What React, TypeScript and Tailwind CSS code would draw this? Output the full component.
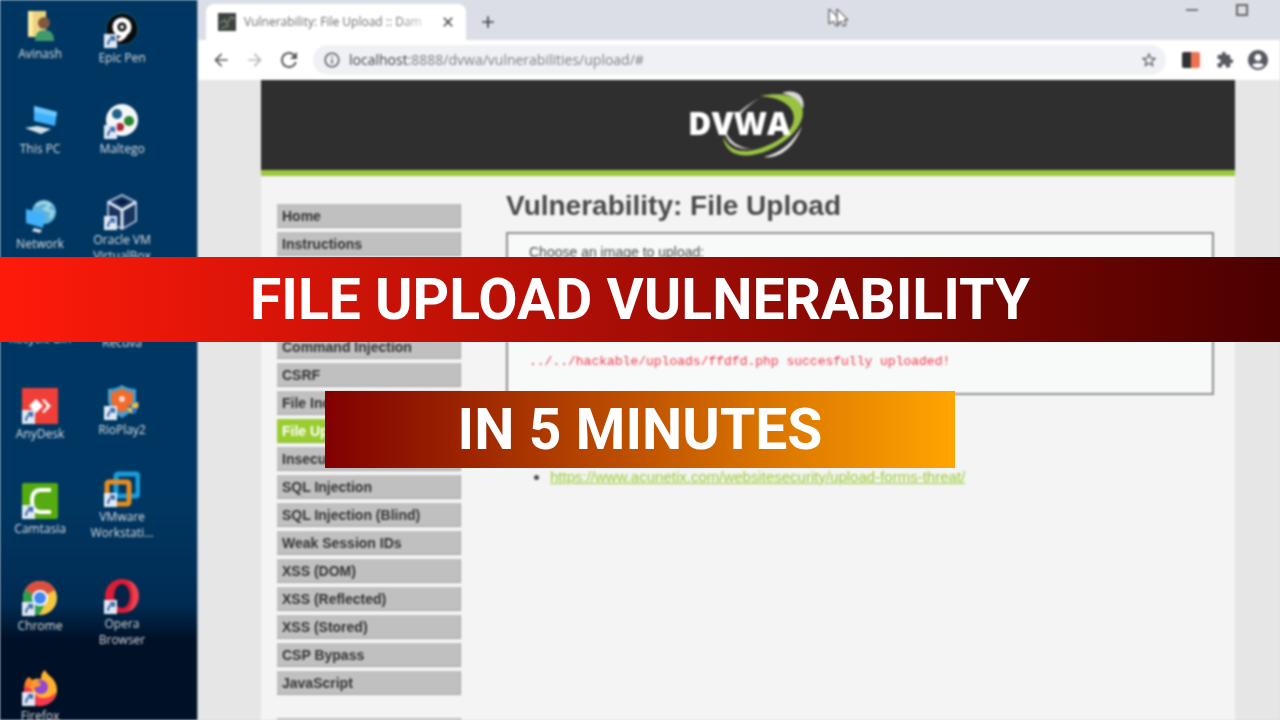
import type { ReactNode } from 'react'
import { MdAccountCircle, MdAdd, MdArrowBack, MdArrowForward, MdClose, MdExtension, MdInfoOutline, MdRefresh, MdStarBorder } from 'react-icons/md'

type DesktopItem = {
  label: string
  height: string
  icon: ReactNode
}

function Shortcut() {
  return (
    <>
      <rect x="0" y="22" width="13" height="14" fill="#dfe8f3" />
      <path d="M4 33c0-4 2-6 5-6M6 25h4v4" stroke="#3a68ac" strokeWidth="2" fill="none" />
    </>
  )
}

const leftIcons: DesktopItem[] = [
  {
    label: 'Avinash',
    height: 'h-[95px]',
    icon: (
      <>
        <path d="M6 3h18v26H6z" fill="#ecd27c" />
        <path d="M6 3h5v26l-5-2z" fill="#fbe9a4" />
        <circle cx="22" cy="15" r="6" fill="#80583c" />
        <path d="M13 33c0-8 4-11 10-11s9 4 9 11z" fill="#3f9a6c" />
      </>
    ),
  },
  {
    label: 'This PC',
    height: 'h-[95px]',
    icon: (
      <>
        <path d="M12 3l23 6-2 14-21-5z" fill="#3fb0fa" />
        <path d="M12 3l23 6-1 5-22-5z" fill="#6cc6ff" />
        <path d="M3 25l12-2 14 3-10 5z" fill="#d5dfe8" />
      </>
    ),
  },
  {
    label: 'Network',
    height: 'h-[95px]',
    icon: (
      <>
        <circle cx="22" cy="14" r="12" fill="#5cb4dc" />
        <path d="M14 8c4-5 12-4 14-1l-5 4 8 3-3 6" fill="none" stroke="#a4d3df" strokeWidth="3" />
        <path d="M4 11l19 5-2 14-17-5z" fill="#42b0fa" />
        <path d="M12 30l8 2-2 3-8-2z" fill="#d5dfe8" />
      </>
    ),
  },
  {
    label: 'Recycle Bin',
    height: 'h-[95px]',
    icon: <path d="M7 5h22l-4 28H11z" fill="#d9e5ee" />,
  },
  {
    label: 'AnyDesk',
    height: 'h-[95px]',
    icon: (
      <>
        <rect width="36" height="36" fill="#ef3f38" />
        <path d="M7 18l7-7 7 7-7 7z" fill="#fff" />
        <path d="M20 12l2-1 7 7-7 7-2-1 5-6z" fill="#fff" />
        <Shortcut />
      </>
    ),
  },
  {
    label: 'Camtasia',
    height: 'h-[97px]',
    icon: (
      <>
        <rect width="36" height="36" rx="2" fill="#55ab10" />
        <path d="M29 7H19q-9 0-9 11t9 11h10" fill="none" stroke="#fff" strokeWidth="4" />
        <Shortcut />
      </>
    ),
  },
  {
    label: 'Chrome',
    height: 'h-[90px]',
    icon: (
      <>
        <circle cx="18" cy="18" r="17" fill="#f4c842" />
        <path d="M18 18L3 10a17 17 0 0 1 30 0z" fill="#d9503f" />
        <path d="M18 18L3 10a17 17 0 0 0 14 25l5-9z" fill="#2f9d4e" />
        <circle cx="18" cy="18" r="8" fill="#fff" />
        <circle cx="18" cy="18" r="6" fill="#4285f4" />
        <Shortcut />
      </>
    ),
  },
  {
    label: 'Firefox',
    height: 'h-[90px]',
    icon: (
      <>
        <path d="M2 20c0-6 2-11 5-13l3 3c4-2 8-1 9-1 0-4 1-7 4-9 2 6 12 8 12 20a16 15 0 0 1-33 0z" fill="#ffb22e" />
        <path d="M2 20a16 15 0 0 0 32 2c-5 6-10 6-14 6S5 20 10 10c-5 2-8 4-8 10z" fill="#f7374f" />
        <path d="M3 15c1-8 4-8 6-5 5 0 7 3 7 5l-7 5z" fill="#ff8424" />
        <circle cx="19" cy="17" r="7" fill="#9048d5" />
        <path d="M9 12c5-2 10 0 10 3-3 3-7 1-9 5z" fill="#ff9a26" />
        <Shortcut />
      </>
    ),
  },
]

const rightIcons: DesktopItem[] = [
  {
    label: 'Epic Pen',
    height: 'h-[91px]',
    icon: (
      <>
        <circle cx="18" cy="17" r="16" fill="#090b0d" stroke="#146178" />
        <circle cx="18" cy="15" r="7" fill="none" stroke="#fff" strokeWidth="5" />
        <path d="M22 20q-1 6-8 8" stroke="#fff" strokeWidth="4" fill="none" />
        <circle cx="18" cy="15" r="2" fill="#fff" />
        <Shortcut />
      </>
    ),
  },
  {
    label: 'Maltego',
    height: 'h-[91px]',
    icon: (
      <>
        <circle cx="18" cy="17" r="16" fill="#f5f7f7" />
        <circle cx="13" cy="11" r="5" fill="#20618c" />
        <circle cx="25" cy="18" r="5" fill="#25862b" />
        <circle cx="16" cy="24" r="4" fill="#af2534" />
        <Shortcut />
      </>
    ),
  },
  {
    label: 'Oracle VM VirtualBox',
    height: 'h-[103px]',
    icon: (
      <>
        <path d="M4 8l14-7 14 7v19l-14 8-14-8z" fill="#173461" stroke="#9fb3d2" strokeWidth="2" />
        <path d="M4 8l14 8 14-8M18 16v19" stroke="#dde6f2" strokeWidth="3" fill="none" />
        <path d="M12 8l6-3 6 3-6 3z" fill="#061b42" />
        <Shortcut />
      </>
    ),
  },
  {
    label: 'Recuva',
    height: 'h-[87px]',
    icon: <circle cx="18" cy="18" r="15" fill="#7ab648" />,
  },
  {
    label: 'RioPlay2',
    height: 'h-[87px]',
    icon: (
      <>
        <path d="M4 5q8 0 14-4 6 4 14 4v12q-1 10-14 17Q5 27 4 17z" fill="#3f9fd4" />
        <path d="M7 8q6 0 11-4 5 4 11 4v9q-1 7-11 12Q8 24 7 17z" fill="#ef6c2d" />
        <circle cx="18" cy="15" r="3" fill="#f9d9c8" />
        <path d="M23 23q4-3 11-5 1 6-3 12-5 0-8-7z" fill="#2879c8" />
        <path d="M28 20l6-2q1 3 0 6h-6zM23 24h5v6q-4-2-5-6z" fill="#f1be48" />
        <Shortcut />
      </>
    ),
  },
  {
    label: 'VMware Workstati...',
    height: 'h-[107px]',
    icon: (
      <>
        <rect x="12" y="3" width="22" height="22" rx="2" fill="none" stroke="#1a9bd7" strokeWidth="5" />
        <rect x="3" y="11" width="22" height="22" rx="2" fill="none" stroke="#e88b20" strokeWidth="5" />
        <Shortcut />
      </>
    ),
  },
  {
    label: 'Opera Browser',
    height: 'h-[90px]',
    icon: (
      <>
        <circle cx="18" cy="18" r="17" fill="#dc1d35" />
        <path d="M22 2c17 2 17 30 0 32 9-4 9-28 0-32z" fill="#e8434f" />
        <ellipse cx="18" cy="18" rx="8" ry="12" fill="#062347" />
        <Shortcut />
      </>
    ),
  },
]

function DesktopColumn({ items }: { items: DesktopItem[] }) {
  return (
    <ul className="w-20 shrink-0">
      {items.map((item) => (
        <li key={item.label} className={`${item.height} flex flex-col items-center gap-0.5`}>
          <svg viewBox="0 0 36 36" className="size-9 shrink-0" aria-hidden="true">
            {item.icon}
          </svg>
          <span className="w-20 px-1 text-center text-xs leading-4 text-[#d3d6da]">{item.label}</span>
        </li>
      ))}
    </ul>
  )
}

const menuGroups = [
  ['Home', 'Instructions', 'Setup / Reset DB'],
  [
    'Brute Force',
    'Command Injection',
    'CSRF',
    'File Inclusion',
    'File Upload',
    'Insecure CAPTCHA',
    'SQL Injection',
    'SQL Injection (Blind)',
    'Weak Session IDs',
    'XSS (DOM)',
    'XSS (Reflected)',
    'XSS (Stored)',
    'CSP Bypass',
    'JavaScript',
  ],
  ['DVWA Security', 'PHP Info', 'About'],
]

function BrowserChrome() {
  return (
    <header className="font-['Open_Sans',sans-serif]">
      <div className="flex h-10 items-end bg-[#dcdee7] pl-2">
        <div className="flex h-9 w-[260px] items-center rounded-t-lg bg-white pl-3 pr-2">
          <svg viewBox="0 0 18 18" className="size-[18px] shrink-0" aria-hidden="true">
            <rect width="18" height="18" fill="#3d4141" />
            <path d="M2 10l5-3 2 4 4-7 4 2M3 15l8-2" stroke="#6d7866" strokeWidth="2" fill="none" />
          </svg>
          <span className="ml-2 flex-1 overflow-hidden whitespace-nowrap bg-linear-to-r from-[#666] from-80% to-white bg-clip-text text-xs text-transparent">
            Vulnerability: File Upload :: Dam
          </span>
          <button aria-label="Close tab" className="ml-1 p-0.5 text-[#333]">
            <MdClose className="size-4" />
          </button>
        </div>
        <button aria-label="New tab" className="mb-2 ml-3 text-[#3c4043]">
          <MdAdd className="size-5" />
        </button>
        <div className="flex flex-1 items-center justify-end gap-[38px] self-start pr-8 pt-1">
          <button aria-label="Minimize" className="flex h-3 w-3 items-center">
            <span className="h-0.5 w-full bg-[#777]" />
          </button>
          <button aria-label="Maximize" className="size-3 border-2 border-[#666]" />
        </div>
      </div>
      <div className="flex h-10 items-center bg-white pl-[13px] pr-2.5 text-[#55595f]">
        <button aria-label="Back">
          <MdArrowBack className="size-5" />
        </button>
        <button aria-label="Forward" className="ml-[14px] text-[#b5b7ba]">
          <MdArrowForward className="size-5" />
        </button>
        <button aria-label="Reload" className="ml-3">
          <MdRefresh className="size-6" />
        </button>
        <div className="ml-3 mr-4 flex h-[30px] flex-1 items-center rounded-full bg-[#f0f1f5] pl-2.5 pr-2">
          <MdInfoOutline className="size-[18px]" />
          <a href="#" className="ml-2 flex-1 text-sm text-[#808080]">
            <span className="text-[#444]">localhost</span>:8888/dvwa/vulnerabilities/upload/#
          </a>
          <button aria-label="Bookmark">
            <MdStarBorder className="size-[18px]" />
          </button>
        </div>
        <svg viewBox="0 0 18 16" className="h-4 w-[18px]" aria-hidden="true">
          <rect width="9" height="16" rx="2" fill="#303238" />
          <rect x="9" width="9" height="16" rx="2" fill="#ed7350" />
          <rect x="7" width="4" height="16" fill="#ed7350" />
          <rect x="7" width="2" height="16" fill="#303238" />
        </svg>
        <button aria-label="Extensions" className="ml-4">
          <MdExtension className="size-[18px]" />
        </button>
        <button aria-label="Profile" className="ml-3">
          <MdAccountCircle className="size-6" />
        </button>
      </div>
    </header>
  )
}

function DvwaLogo() {
  return (
    <svg viewBox="0 0 116 70" className="h-[70px] w-[116px]" role="img" aria-label="DVWA">
      <path d="M44 28C50 19 60 13 70 8c-8 5-16 12-20 18z" fill="#a8a8a8" />
      <path d="M92 3c14-5 24 3 21 16-4-8-10-13-21-16z" fill="#d8d8d8" />
      <path d="M70 6c56-11 55 33 9 54-23 10-44 7-46-14 7 19 26 18 48 8C114 38 112 9 70 6z" fill="#9ac343" />
      <path d="M112 36c-8 23-24 33-38 31 18-5 28-14 38-31z" fill="#e3e3e3" />
      <path d="M35 38c3 14 15 20 27 21-15 1-28-6-27-21z" fill="#ddd" />
      <text x="-2" y="45" fill="#fff" fontFamily="Open Sans, sans-serif" fontSize="32" fontWeight="800">
        DVWA
      </text>
    </svg>
  )
}

function DvwaPage() {
  return (
    <div className="flex-1 bg-[#e6e6e6] pl-[63px] pr-[45px]">
      <div className="min-h-full bg-[#f4f4f4]">
        <div className="flex h-24 items-center justify-center border-b-6 border-[#9bc83c] bg-[#2f2f2f]">
          <DvwaLogo />
        </div>
        <div className="flex pl-4 pr-[21px]">
          <nav className="flex w-[184px] shrink-0 flex-col gap-[23px] pt-7">
            {menuGroups.map((group) => (
              <ul key={group[0]} className="flex flex-col gap-1">
                {group.map((name) => (
                  <li key={name}>
                    <a
                      href="#"
                      className={
                        name === 'File Upload'
                          ? 'block h-6 border-b border-r border-[#86b52c] bg-[#9acd32] pl-[5px] text-sm leading-6 font-bold text-white'
                          : 'block h-6 border-b border-r border-[#a4a4a8] bg-[#c0c0c0] pl-[5px] text-sm leading-6 font-bold text-[#333]'
                      }
                    >
                      {name}
                    </a>
                  </li>
                ))}
              </ul>
            ))}
          </nav>
          <main className="ml-[45px] flex-1 pt-3 text-sm text-[#4a4a4a]">
            <h1 className="text-[28px] leading-9 font-bold">Vulnerability: File Upload</h1>
            <form className="mt-2 flex h-[163px] flex-col items-start border-2 border-[#8f8f8f] bg-[#f8faf9] px-[21px] pt-2">
              <label htmlFor="upload">Choose an image to upload:</label>
              <input id="upload" type="file" className="mt-2" />
              <button type="button" className="mt-3 border border-gray-400 bg-gray-200 px-2">
                Upload
              </button>
              <pre className="mt-7 font-['Liberation_Mono',monospace] text-[13px] leading-5 text-[#f0384a]">
                ../../hackable/uploads/ffdfd.php succesfully uploaded!
              </pre>
            </form>
            <h2 className="mt-4 text-lg leading-6 font-bold">More Information</h2>
            <ul className="mt-8 list-disc pl-11 text-[15px] leading-5">
              <li>
                <a href="#" className="text-[#9acd32] underline">
                  https://www.acunetix.com/websitesecurity/upload-forms-threat/
                </a>
              </li>
            </ul>
          </main>
        </div>
      </div>
    </div>
  )
}

export default function App() {
  return (
    <div className="relative h-screen overflow-hidden bg-[#dcdee7] font-['Liberation_Sans',Arial,sans-serif]">
      <div className="flex h-full overflow-hidden blur-[1px]">
        <aside className="flex w-[197px] shrink-0 gap-0.5 bg-linear-to-b from-[#003762] from-70% via-[#002b52] via-84% to-[#001026] to-89% font-['Open_Sans',sans-serif]">
          <div className="pt-2">
            <DesktopColumn items={leftIcons} />
          </div>
          <div className="pt-3">
            <DesktopColumn items={rightIcons} />
          </div>
        </aside>
        <section className="flex min-w-0 flex-1 flex-col border-l border-[#8aa0b8]">
          <BrowserChrome />
          <DvwaPage />
        </section>
      </div>

      <svg viewBox="0 0 22 22" className="absolute left-[827px] top-[7px] size-[22px] blur-[1px]" aria-hidden="true">
        <path d="M2 2v15l4-3 3 5 3-1-2-5h4z" fill="#fff" stroke="#333" />
        <path d="M10 2v15l4-3 2 5 3-1-2-5h4z" fill="#fff" stroke="#333" />
      </svg>

      <div className="absolute inset-x-0 top-[257px] flex flex-col items-center gap-[49px] font-['Roboto',sans-serif] text-[57px] font-bold whitespace-nowrap text-white">
        <div className="flex h-[85px] w-full items-center justify-center bg-linear-to-r/srgb from-[#ff1a0a] to-[#4b0000]">
          FILE UPLOAD VULNERABILITY
        </div>
        <div className="flex h-[77px] w-[630px] items-center justify-center bg-linear-to-r/srgb from-[#800000] to-[#ffa500]">
          IN 5 MINUTES
        </div>
      </div>
    </div>
  )
}
